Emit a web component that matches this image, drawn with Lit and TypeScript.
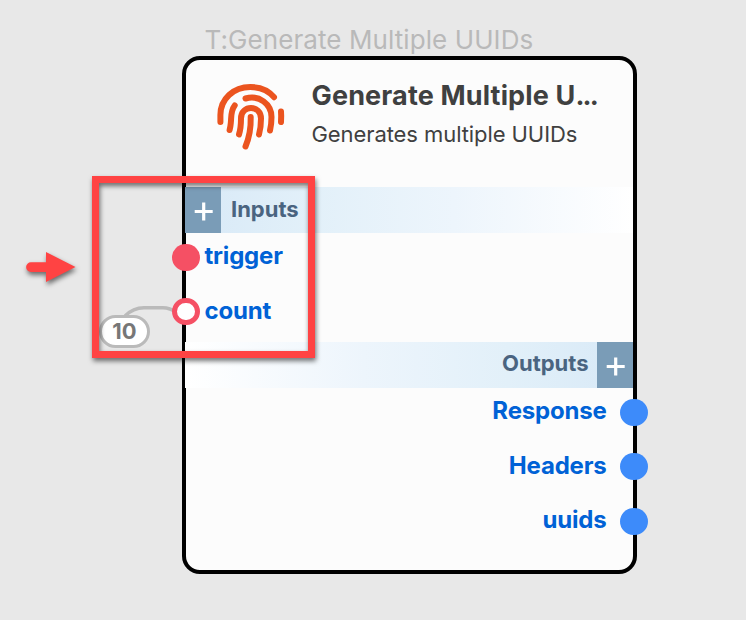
import { LitElement, html, css } from "lit";
import { customElement, property } from "lit/decorators.js";

@customElement("port-row")
class PortRow extends LitElement {
  @property() label = "";
  @property() kind = "";

  static styles = css`
    :host {
      display: block;
      height: 54.5px;
    }
    .row {
      display: flex;
      align-items: flex-start;
      position: relative;
      height: 54.5px;
      padding-left: 19px;
      box-sizing: border-box;
    }
    .row.out {
      justify-content: flex-end;
      padding: 0 26.5px 0 0;
    }
    .label {
      font: 700 24px/46px Inter, sans-serif;
      letter-spacing: -0.2px;
      color: #0062d6;
    }
    .out .label {
      line-height: 45.8px;
    }
    .dot {
      position: absolute;
      top: 10.6px;
      left: -13.3px;
      width: 27.4px;
      height: 27.4px;
      box-sizing: border-box;
      border-radius: 50%;
      background: #f55064;
    }
    .open {
      background: #fff;
      border: 5px solid #f55064;
    }
    .out .dot {
      left: auto;
      right: -14.5px;
      background: #3d8bfa;
    }
  `;

  render() {
    return html`<div class="row ${this.kind === "output" ? "out" : ""}">
      <span class="label">${this.label}</span>
      <span class="dot ${this.kind === "open" ? "open" : ""}"></span>
    </div>`;
  }
}

@customElement("app-root")
class AppRoot extends LitElement {
  static styles = css`
    :host {
      display: block;
      position: relative;
      width: 746px;
      height: 620px;
      overflow: hidden;
      background: #e8e8e8;
      font-family: Inter, sans-serif;
    }
    .caption {
      position: absolute;
      left: 204.5px;
      top: 24px;
      font-size: 26px;
      line-height: 32px;
      letter-spacing: 0.08px;
      color: #b9b9b9;
      white-space: nowrap;
    }
    .node {
      position: absolute;
      left: 181.5px;
      top: 56px;
      width: 455.5px;
      height: 517.5px;
      box-sizing: border-box;
      border: 4px solid #000;
      border-radius: 18px;
      background: #fcfcfc;
    }
    .head {
      display: flex;
      height: 127px;
      box-sizing: border-box;
      padding: 18px 0 0 24.5px;
    }
    .print {
      width: 80px;
      height: 80px;
      flex: none;
    }
    .titles {
      margin-left: 21.5px;
      white-space: nowrap;
    }
    .title {
      font-size: 27px;
      font-weight: 700;
      line-height: 35px;
      height: 36px;
      letter-spacing: 0.15px;
      color: #3f4040;
    }
    .dots {
      letter-spacing: -1.9px;
    }
    .sub {
      font-size: 22px;
      line-height: 40px;
      letter-spacing: -0.08px;
      color: #404040;
    }
    .bar {
      display: flex;
      height: 46px;
      margin-left: -1px;
      font-size: 22px;
      font-weight: 700;
      line-height: 44px;
      color: #4a6480;
    }
    .bar.in {
      background: linear-gradient(90deg, #d8e9f7, #e2f0f9 28%, #edf5fc 60%, #fff);
    }
    .bar.out {
      justify-content: flex-end;
      background: linear-gradient(270deg, #d8e9f7, #e2f0f9 28%, #edf5fc 60%, #fff);
    }
    .in .name {
      margin-left: 10px;
    }
    .out .name {
      margin-right: 8px;
      line-height: 43px;
    }
    .add {
      width: 36.5px;
      height: 46px;
      background: #7a9cb7;
    }
    .ports {
      height: 109px;
    }
    .overlay {
      position: absolute;
      inset: 0;
    }
    .value {
      position: absolute;
      left: 99px;
      top: 314.5px;
      width: 51px;
      height: 33px;
      box-sizing: border-box;
      border: 3.5px solid #bababa;
      border-radius: 17px;
      background: #fff;
      color: #777;
      font-size: 22px;
      font-weight: 700;
      line-height: 27px;
      text-align: center;
    }
    .frame {
      position: absolute;
      left: 92px;
      top: 176px;
      width: 223px;
      height: 182px;
      box-sizing: border-box;
      border: 7px solid #ff4343;
      filter: drop-shadow(1px 3px 2.5px rgba(0, 0, 0, 0.55));
    }
    .arrow {
      position: absolute;
      left: 10px;
      top: 235px;
      filter: drop-shadow(1px 3px 2.5px rgba(0, 0, 0, 0.55));
    }
  `;

  plus(x: number) {
    return html`<svg class="add" viewBox="0 0 36.5 46">
      <path d="M${x - 9} 24.5h18M${x} 15.5v18" stroke="#fff" stroke-width="3.2" />
    </svg>`;
  }

  render() {
    return html`
      <div class="caption">T:Generate Multiple UUIDs</div>
      <svg class="overlay" width="746" height="620">
        <path d="M125 316C131 310 137 307.8 144 307.8H163C169 307.8 173 310 178 313" fill="none" stroke="#bababa" stroke-width="3.4" />
      </svg>
      <div class="node">
        <div class="head">
          <svg class="print" viewBox="0 0 80 80" fill="none" stroke="#eb541f" stroke-width="6" stroke-linecap="round" stroke-linejoin="round">
            <path d="M10.4 44V37C10.4 21 23.5 9 40.3 9C50 9 58.5 12.500 64 19.200" />
            <path d="M71 33.500Q71.400 38 71 44" />
            <path d="M24.700 27.500C20.500 33 21.500 39 20.800 45Q20.500 48.500 19.600 52" />
            <path d="M35.500 20.500C49 16.500 61.500 26 61.500 39Q61.500 46 60 52.500" />
            <path d="M29 56.500C31 50 31 45 31 40.500C31 26.500 51 26.500 51 40.500Q51 49.500 49 56.500" />
            <path d="M40.700 39C41 50 39.500 59 35.500 68.500" />
          </svg>
          <div class="titles">
            <div class="title">Generate Multiple U<span class="dots">...</span></div>
            <div class="sub">Generates multiple UUIDs</div>
          </div>
        </div>
        <div class="bar in">${this.plus(18.7)}<span class="name">Inputs</span></div>
        <div class="ports">
          <port-row label="trigger" kind="solid"></port-row>
          <port-row label="count" kind="open"></port-row>
        </div>
        <div class="bar out"><span class="name">Outputs</span>${this.plus(18.7)}</div>
        <port-row label="Response" kind="output"></port-row>
        <port-row label="Headers" kind="output"></port-row>
        <port-row label="uuids" kind="output"></port-row>
      </div>
      <div class="value">10</div>
      <div class="frame"></div>
      <svg class="arrow" width="90" height="60">
        <path d="M21 27.200H36V17L65.500 32L36 47V37H21A4.900 4.900 0 0 1 21 27.200Z" fill="#ff4343" />
      </svg>
    `;
  }
}
